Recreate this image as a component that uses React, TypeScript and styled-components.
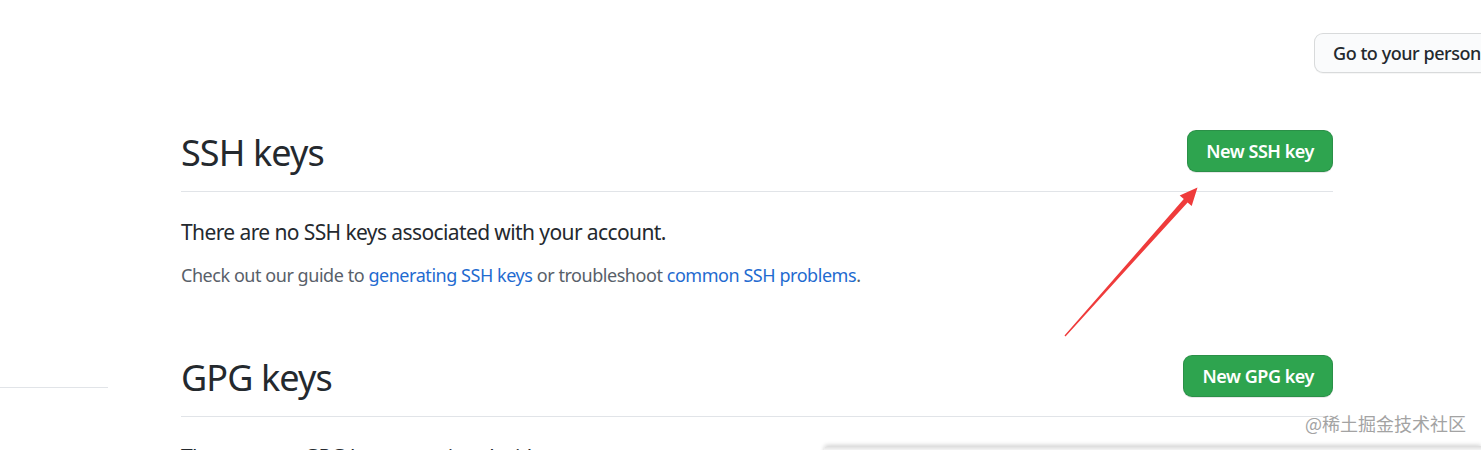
import styled, { createGlobalStyle } from "styled-components";

const GlobalStyle = createGlobalStyle`
    html, body {
        margin: 0;
        padding: 0;
        background: #fff;
        overflow: hidden;
    }
    body {
        font-family: "Noto Sans", "Open Sans", Arial, sans-serif;
        color: #24292e;
    }
`

const Page = styled.div`
    position: relative;
    width: 100vw;
    height: 450px;
    overflow: hidden;
`

const TopBar = styled.div`
    display: flex;
    padding: 33px 0 0 1314px;
    white-space: nowrap;
`

const Button = styled.button<{ $primary?: boolean }>`
    flex-shrink: 0;
    box-sizing: border-box;
    font-family: inherit;
    font-size: 18px;
    line-height: 24px;
    border-radius: 9px;
    white-space: nowrap;
    cursor: pointer;
    font-weight: ${p => (p.$primary ? 600 : 500)};
    letter-spacing: -0.45px;
    padding: ${p => (p.$primary ? "8px 18px" : "7px 18px")};
    height: ${p => (p.$primary ? "42px" : "40px")};
    color: ${p => (p.$primary ? "#fff" : "#24292e")};
    background: ${p => (p.$primary ? "#2ea44f" : "#fafbfc")};
    border: 1px solid rgba(27, 31, 35, 0.15);
    box-shadow: ${p => (p.$primary ? "0 1px 0 rgba(27, 31, 35, 0.1)" : "0 1px 0 rgba(27, 31, 35, 0.04)")};
`

const Layout = styled.div`
    display: grid;
    grid-template-columns: 108px 1152px;
    column-gap: 73px;
`

const Sidebar = styled.nav`
    display: flex;
    flex-direction: column;
`

const SideGroup = styled.div`
    height: 314px;
    border-bottom: 1px solid #e1e4e8;
`

const Main = styled.main`
    padding-top: 57px;
`

const Section = styled.section<{ $spaced?: boolean }>`
    margin-top: ${p => (p.$spaced ? "66px" : "0")};
`

const SectionHeader = styled.div`
    display: flex;
    justify-content: space-between;
    align-items: flex-start;
    padding-bottom: 16px;
    border-bottom: 1px solid #e1e4e8;
`

const Heading = styled.h2`
    margin: 0;
    font-size: 36px;
    font-weight: 400;
    line-height: 45px;
    letter-spacing: -0.9px;
    color: #24292e;
`

const Blank = styled.p`
    margin: 25px 0 0;
    font-size: 21px;
    line-height: 31.5px;
    letter-spacing: -0.6px;
    color: #24292e;
`

const Note = styled.p`
    margin: 12px 0 0;
    font-size: 18px;
    line-height: 28px;
    letter-spacing: -0.45px;
    color: #586069;
`

const Link = styled.a`
    color: #1f6bd0;
    text-decoration: none;
`

const Arrow = styled.svg`
    position: absolute;
    left: 0;
    top: 0;
    pointer-events: none;
`

const Watermark = styled.div`
    position: absolute;
    right: 15px;
    top: 411px;
    font-family: "Noto Sans CJK SC", "Noto Sans", sans-serif;
    font-size: 18px;
    line-height: 24px;
    color: #a3a3a3;
    text-shadow: 0 0 2px #fff, 0 0 1px #fff;
`

const FloatingEdge = styled.div`
    position: absolute;
    left: 824px;
    right: 0;
    top: 446px;
    height: 20px;
    background: linear-gradient(#dcdcdc, #f4f4f4 4px, #fafafa);
    box-shadow: 0 -1px 4px rgba(0, 0, 0, 0.18);
    border-radius: 4px 0 0 0;
`

export default function App() {
    return (
        <Page>
            <GlobalStyle />
            <TopBar>
                <Button>Go to your personal profile</Button>
            </TopBar>
            <Layout>
                <Sidebar>
                    <SideGroup />
                </Sidebar>
                <Main>
                    <Section>
                        <SectionHeader>
                            <Heading>SSH keys</Heading>
                            <Button $primary>New SSH key</Button>
                        </SectionHeader>
                        <Blank>There are no SSH keys associated with your account.</Blank>
                        <Note>
                            Check out our guide to <Link href="#">generating SSH keys</Link> or troubleshoot{" "}
                            <Link href="#">common SSH problems</Link>.
                        </Note>
                    </Section>
                    <Section $spaced>
                        <SectionHeader>
                            <Heading>GPG keys</Heading>
                            <Button $primary>New GPG key</Button>
                        </SectionHeader>
                        <Blank>There are no GPG keys associated with your account.</Blank>
                    </Section>
                </Main>
            </Layout>
            <Arrow width="1481" height="450" viewBox="0 0 1481 450">
                <polygon
                    fill="#ef3b3b"
                    points="1064.5,335.6 1183.8,199 1179.7,195.4 1197.5,187.5 1191.7,206 1187.6,202.4 1065.5,336.4"
                />
            </Arrow>
            <FloatingEdge />
            <Watermark>@稀土掘金技术社区</Watermark>
        </Page>
    );
}
